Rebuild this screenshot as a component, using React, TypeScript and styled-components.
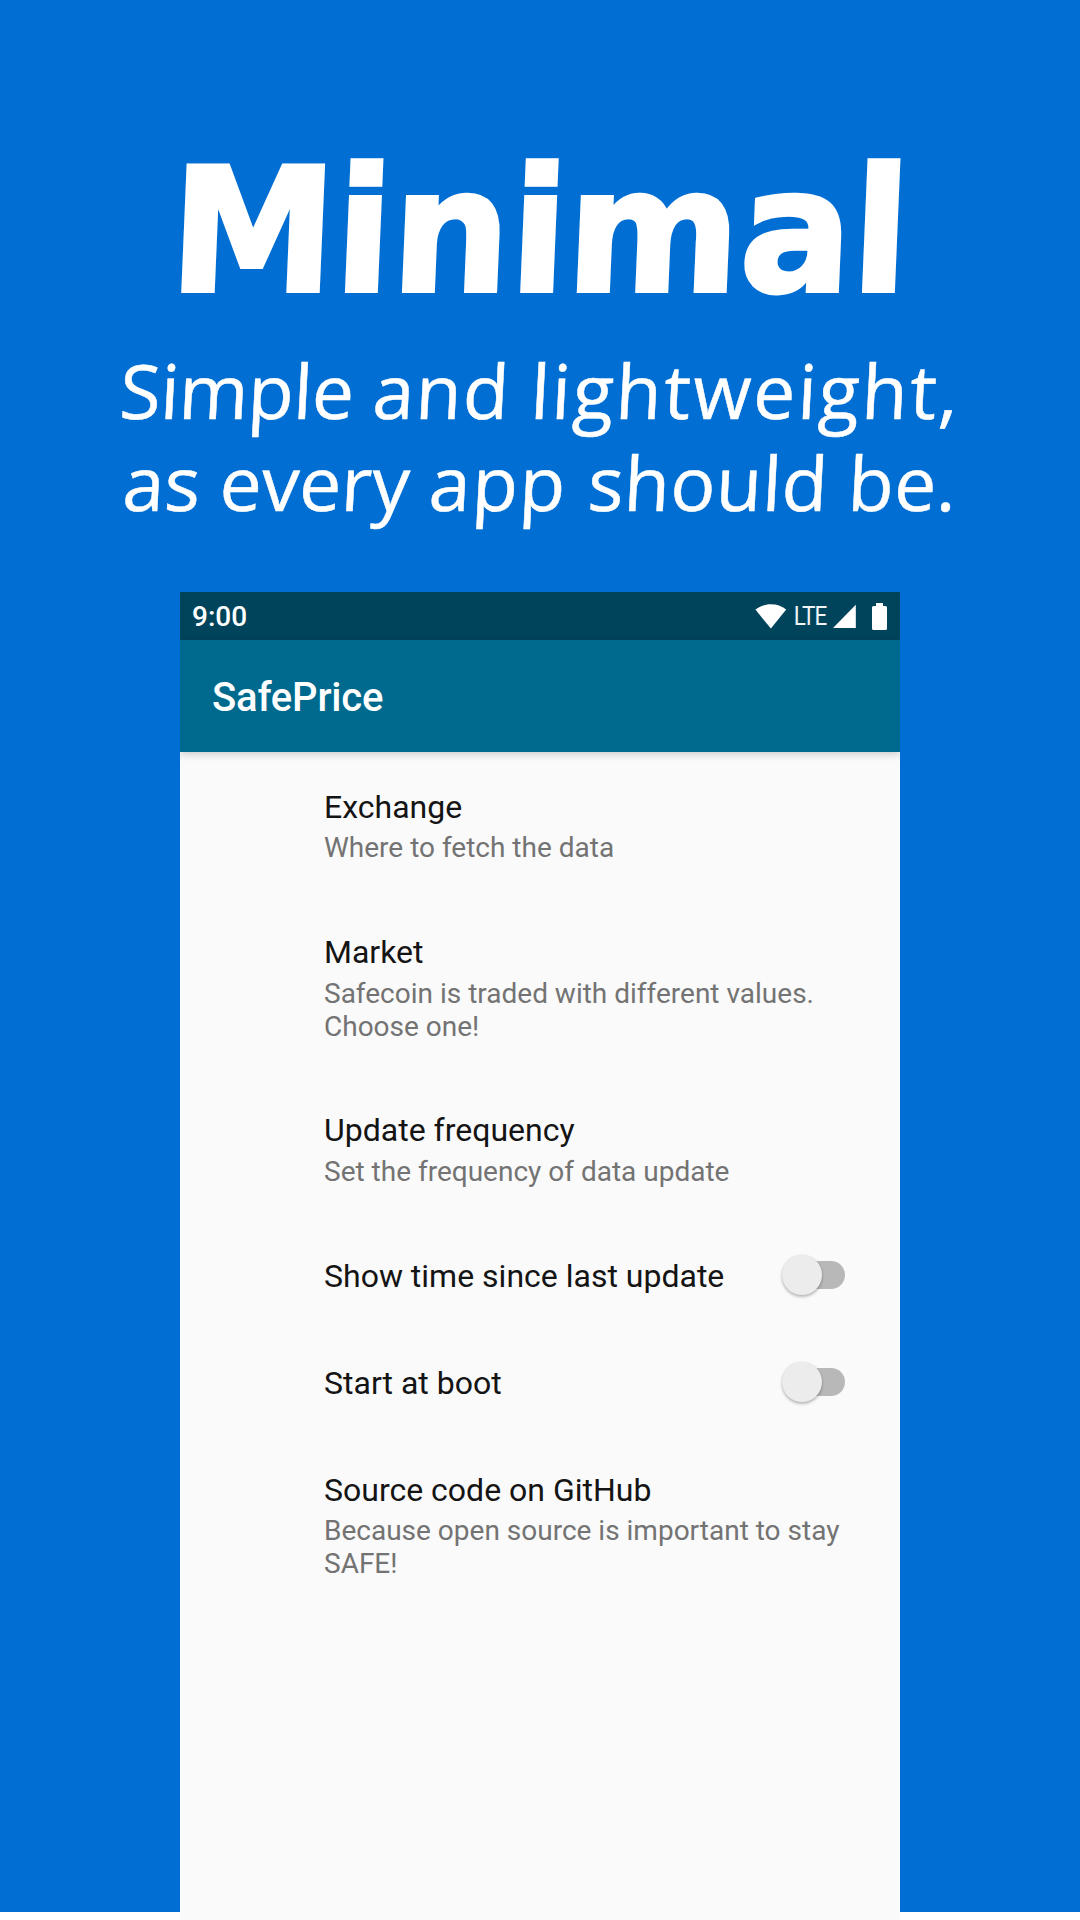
import React from "react";
import styled, { createGlobalStyle } from "styled-components";

const GlobalStyle = createGlobalStyle`
  *, *::before, *::after { box-sizing: border-box; }
  html, body { margin: 0; padding: 0; background: #ffffff; }
  h1, h2, p { margin: 0; font-weight: 400; }
`;

const Page = styled.div`
  width: 1080px;
  height: 1920px;
  overflow: hidden;
  display: flex;
  flex-direction: column;
  align-items: center;
  background: linear-gradient(#006ed2 1912px, #ffffff 1912px);
`;

const Hero = styled.header`
  height: 592px;
  padding-top: 132px;
  display: flex;
  flex-direction: column;
  align-items: center;
  flex-shrink: 0;
  color: #ffffff;
`;

const Headline = styled.h1`
  font: 700 172px/200px "DejaVu Sans", sans-serif;
  white-space: nowrap;
  transform: scaleX(0.965) skewX(-2.5deg);
  -webkit-text-stroke: 4px #ffffff;
`;

const TaglineGroup = styled.div`
  margin-top: 12px;
  display: flex;
  flex-direction: column;
  align-items: center;
`;

const Tagline = styled.p`
  font: 400 75px/92px "Open Sans", "Noto Sans", sans-serif;
  white-space: nowrap;
  transform: skewX(-3deg);
  -webkit-text-stroke: 0.5px #ffffff;
`;

const Word = styled.span<{ $tracking: number }>`
  letter-spacing: ${(p) => p.$tracking}px;
`;

const Phone = styled.main`
  width: 720px;
  height: 1328px;
  flex-shrink: 0;
  overflow: hidden;
  display: flex;
  flex-direction: column;
  background: #fafafa;
  font-family: Roboto, "Noto Sans", sans-serif;
`;

const StatusBar = styled.div`
  height: 48px;
  padding: 0 13px 0 12px;
  display: flex;
  align-items: center;
  justify-content: space-between;
  background: #00445c;
  color: #ffffff;
`;

const Clock = styled.span`
  padding-top: 2px;
  font-size: 28px;
  font-weight: 500;
  line-height: 46px;
`;

const StatusIcons = styled.div`
  display: flex;
  align-items: center;
`;

const Network = styled.span`
  margin: 0 5px;
  padding-top: 2px;
  font-size: 25px;
  line-height: 46px;
  letter-spacing: -1px;
  color: #f0f5f7;
  transform: scaleX(0.9);
`;

const AppBar = styled.div`
  height: 112px;
  padding: 4px 0 0 32px;
  display: flex;
  align-items: center;
  background: #006a8e;
  box-shadow: 0 2px 8px rgba(0, 0, 0, 0.2);
`;

const AppTitle = styled.h2`
  font-size: 40px;
  font-weight: 500;
  line-height: 48px;
  letter-spacing: -0.2px;
  color: #ffffff;
`;

const Preferences = styled.div`
  padding-top: 1px;
  display: flex;
  flex-direction: column;
`;

const Row = styled.div`
  padding: 35px 52px 34.2px 144px;
  display: flex;
  justify-content: space-between;
`;

const Label = styled.div`
  display: flex;
  flex-direction: column;
`;

const Title = styled.div`
  font-size: 32px;
  line-height: 38px;
  white-space: nowrap;
  color: #141414;
`;

const Summary = styled.p`
  margin: 5.4px 0 -0.4px;
  font-size: 28px;
  line-height: 33px;
  white-space: pre-line;
  color: #737373;
`;

const Track = styled.div`
  width: 60px;
  height: 28px;
  margin: 4px 3px 0 0;
  display: flex;
  border-radius: 14px;
  background: #b8b8b8;
`;

const Thumb = styled.div`
  width: 40px;
  height: 40px;
  margin: -6px 0 0 -3.5px;
  border-radius: 50%;
  background: #ececec;
  box-shadow: 0 2px 3px rgba(0, 0, 0, 0.25), 0 0 2px rgba(0, 0, 0, 0.1);
`;

const Battery = styled.svg`
  margin-left: 15px;
`;

interface Preference {
  title: string;
  summary?: string;
  toggle?: boolean;
}

const preferences: Preference[] = [
  { title: "Exchange", summary: "Where to fetch the data" },
  { title: "Market", summary: "Safecoin is traded with different values.\nChoose one!" },
  { title: "Update frequency", summary: "Set the frequency of data update" },
  { title: "Show time since last update", toggle: true },
  { title: "Start at boot", toggle: true },
  { title: "Source code on GitHub", summary: "Because open source is important to stay\nSAFE!" },
];

const WifiIcon = () => (
  <svg width="32" height="26" viewBox="0 0 32 26" fill="#fff">
    <path d="M.4 6.600C5 3 10 1.200 15.900 1.200S26.600 3 31.200 6.600L15.900 25.600Z" />
  </svg>
);

const SignalIcon = () => (
  <svg width="24" height="24" viewBox="0 0 24 24" fill="#fff">
    <path d="M0 24 22.800.8V24Z" />
  </svg>
);

const BatteryIcon = () => (
  <Battery width="15" height="27" viewBox="0 0 15 27" fill="#fff">
    <path d="M4 0H11V3H13.500Q15 3 15 4.500V25.500Q15 27 13.500 27H1.500Q0 27 0 25.500V4.500Q0 3 1.500 3H4Z" />
  </Battery>
);

export default function App() {
  return (
    <Page>
      <GlobalStyle />
      <Hero>
        <Headline>Minimal</Headline>
        <TaglineGroup>
          <Tagline>
            <Word $tracking={-0.4}>Simple </Word>
            <Word $tracking={1.2}>and </Word>
            <Word $tracking={2.2}>lightweight,</Word>
          </Tagline>
          <Tagline>
            <Word $tracking={0}>as every </Word>
            <Word $tracking={1.5}>app </Word>
            <Word $tracking={0.4}>should be.</Word>
          </Tagline>
        </TaglineGroup>
      </Hero>
      <Phone>
        <StatusBar>
          <Clock>9:00</Clock>
          <StatusIcons>
            <WifiIcon />
            <Network>LTE</Network>
            <SignalIcon />
            <BatteryIcon />
          </StatusIcons>
        </StatusBar>
        <AppBar>
          <AppTitle>SafePrice</AppTitle>
        </AppBar>
        <Preferences>
          {preferences.map((item) => (
            <Row key={item.title}>
              <Label>
                <Title>{item.title}</Title>
                {item.summary && <Summary>{item.summary}</Summary>}
              </Label>
              {item.toggle && (
                <Track>
                  <Thumb />
                </Track>
              )}
            </Row>
          ))}
        </Preferences>
      </Phone>
    </Page>
  );
}
